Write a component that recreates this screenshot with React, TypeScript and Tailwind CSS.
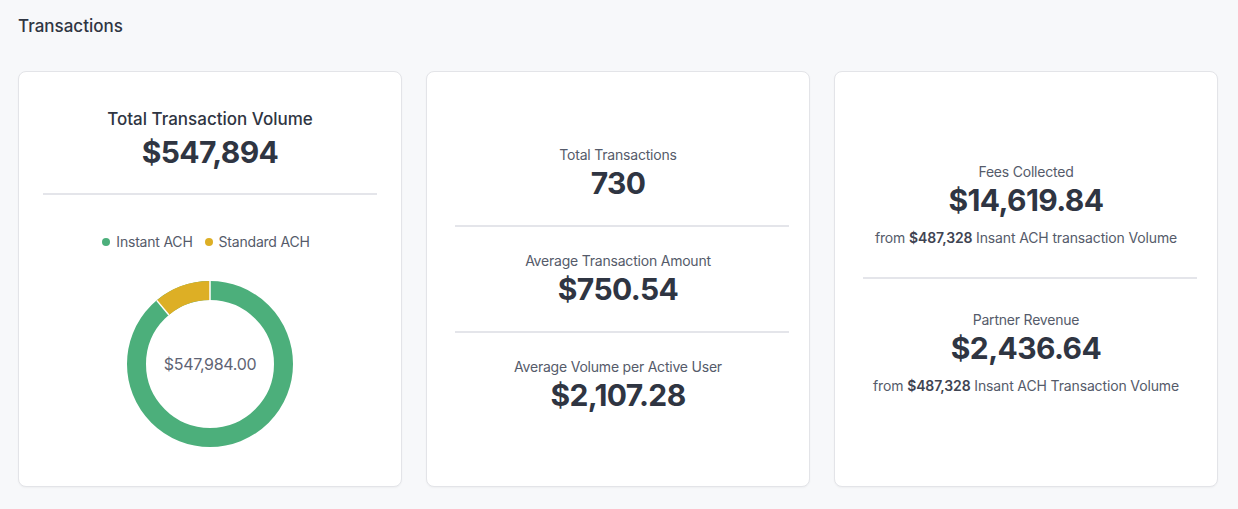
const font = { fontFamily: "Inter, 'Noto Sans', sans-serif" };

const GREEN = "#4caf7b";
const YELLOW = "#ddaf25";

function Divider({ className = "" }: { className?: string }) {
  return <div className={`h-[2px] bg-[#e4e5ea] ${className}`} />;
}

function Donut() {
  const r = 73.5;
  const c = 2 * Math.PI * r;
  const share = 0.111; // standard ACH part
  const angle = share * 360;
  const rad = (a: number) => ((a - 90) * Math.PI) / 180;
  const sep = (a: number) => ({
    x1: 83 + 64 * Math.cos(rad(a)),
    y1: 83 + 64 * Math.sin(rad(a)),
    x2: 83 + 83 * Math.cos(rad(a)),
    y2: 83 + 83 * Math.sin(rad(a)),
  });

  return (
    <div className="relative w-[166px] h-[166px]">
      <svg width="166" height="166" viewBox="0 0 166 166">
        <circle cx="83" cy="83" r={r} fill="none" stroke={GREEN} strokeWidth="19" />
        <circle
          cx="83"
          cy="83"
          r={r}
          fill="none"
          stroke={YELLOW}
          strokeWidth="19"
          strokeDasharray={`${c * share} ${c}`}
          transform={`rotate(${-90 - angle} 83 83)`}
        />
        <line {...sep(0)} stroke="#fff" strokeWidth="1.5" />
        <line {...sep(-angle)} stroke="#fff" strokeWidth="1.5" />
      </svg>
      <div className="absolute inset-0 flex items-center justify-center text-[16px] tracking-[-0.02em] text-[#5f6474]">
        $547,984.00
      </div>
    </div>
  );
}

function Stat({ label, value }: { label: string; value: string }) {
  return (
    <div className="flex flex-col items-center">
      <div className="text-sm leading-[20px] tracking-[-0.015em] text-[#555b6a]">{label}</div>
      <div className="text-[30px] leading-[36px] font-bold tracking-[-0.02em] text-[#2f3542]">{value}</div>
    </div>
  );
}

function FromLine({ last }: { last: string }) {
  return (
    <div className="mt-[10px] text-sm leading-[20px] tracking-[-0.01em] text-[#555b6a] text-center">
      from <span className="font-semibold text-[#3f4452]">$487,328</span> Insant ACH {last}
    </div>
  );
}

export default function App() {
  const card = "bg-white border border-[#e3e4e8] rounded-lg shadow-[0_1px_2px_rgba(0,0,0,0.04)]";

  return (
    <div className="min-h-[509px] bg-[#f7f8fa] pt-[14px] pl-[18px] pr-[20px]" style={font}>
      <h1 className="text-[17px] leading-[24px] font-medium text-[#2f3542]">Transactions</h1>

      <div className="grid grid-cols-3 gap-6 mt-[33px]">
        {/* Volume + donut */}
        <div className={`${card} flex flex-col items-center pt-[35px] pb-[39px]`}>
          <div className="text-[17px] leading-[24px] font-medium text-[#2f3542]">Total Transaction Volume</div>
          <div className="mt-[3px] text-[30px] leading-[36px] font-bold tracking-[-0.02em] text-[#2f3542]">$547,894</div>
          <Divider className="mt-[23px] self-stretch mx-6" />
          <div className="mt-[37px] mr-[8px] flex items-center gap-3 text-sm leading-[20px] tracking-[-0.015em] text-[#555b6a]">
            <div className="flex items-center gap-[6px]">
              <span className="w-2 h-2 rounded-full" style={{ background: GREEN }} />
              Instant ACH
            </div>
            <div className="flex items-center gap-[6px]">
              <span className="w-2 h-2 rounded-full" style={{ background: YELLOW }} />
              Standard ACH
            </div>
          </div>
          <div className="mt-[29px]">
            <Donut />
          </div>
        </div>

        {/* Counts */}
        <div className={`${card} flex flex-col justify-center`}>
          <Stat label="Total Transactions" value="730" />
          <Divider className="my-6 ml-[28px] mr-[20px]" />
          <Stat label="Average Transaction Amount" value="$750.54" />
          <Divider className="my-6 ml-[28px] mr-[20px]" />
          <Stat label="Average Volume per Active User" value="$2,107.28" />
        </div>

        {/* Fees */}
        <div className={`${card} flex flex-col justify-center`}>
          <Stat label="Fees Collected" value="$14,619.84" />
          <FromLine last="transaction Volume" />
          <Divider className="mt-[29px] mb-[31px] ml-[28px] mr-[20px]" />
          <Stat label="Partner Revenue" value="$2,436.64" />
          <FromLine last="Transaction Volume" />
        </div>
      </div>
    </div>
  );
}
